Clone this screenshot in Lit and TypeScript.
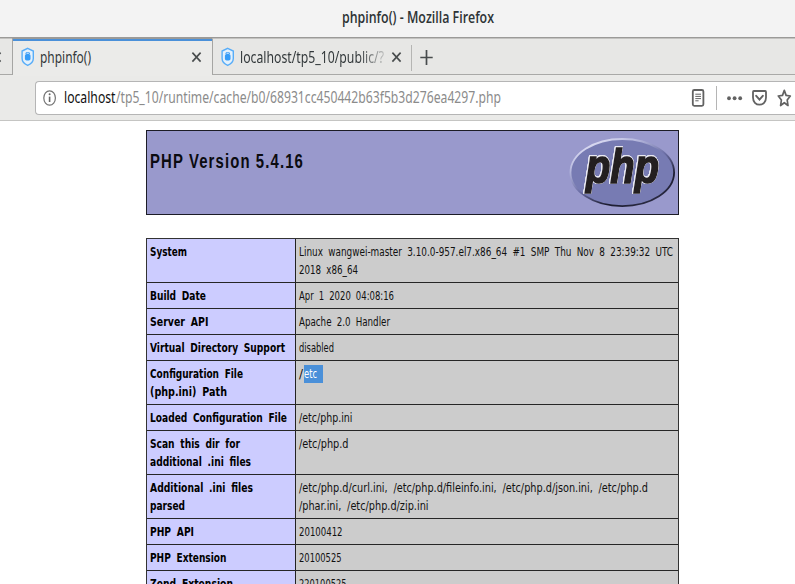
import { LitElement, html, css } from "lit";
import { customElement, property } from "lit/decorators.js";

/** One line of text fitted to a given width. */
@customElement("fit-text")
class FitText extends LitElement {
  @property() text = "";
  @property({ type: Number }) w = 100;
  @property({ type: Number }) h = 18;
  @property({ type: Number }) base = 14;

  static styles = css`
    :host { display: block; flex: none; }
    svg { display: block; overflow: visible; }
    text { fill: currentColor; white-space: pre; }
  `;

  render() {
    return html`<svg width=${this.w} height=${this.h}>
      <text x="0" y=${this.base} textLength=${this.w} lengthAdjust="spacingAndGlyphs">${this.text}</text>
    </svg>`;
  }
}

type Line = [string, number];
interface Row { name: Line[]; value: Line[]; selected?: boolean; }

const ROWS: Row[] = [
  { name: [["System", 37]], value: [["Linux wangwei-master 3.10.0-957.el7.x86_64 #1 SMP Thu Nov 8 23:39:32 UTC", 374], ["2018 x86_64", 59]] },
  { name: [["Build Date", 56]], value: [["Apr 1 2020 04:08:16", 95]] },
  { name: [["Server API", 58.5]], value: [["Apache 2.0 Handler", 91]] },
  { name: [["Virtual Directory Support", 135]], value: [["disabled", 35]] },
  { name: [["Configuration File", 93], ["(php.ini) Path", 77]], value: [["/", 4]], selected: true },
  { name: [["Loaded Configuration File", 137]], value: [["/etc/php.ini", 53.5]] },
  { name: [["Scan this dir for", 90], ["additional .ini files", 101]], value: [["/etc/php.d", 49.5]] },
  { name: [["Additional .ini files", 103], ["parsed", 35]], value: [["/etc/php.d/curl.ini, /etc/php.d/fileinfo.ini, /etc/php.d/json.ini, /etc/php.d", 349], ["/phar.ini, /etc/php.d/zip.ini", 129.5]] },
  { name: [["PHP API", 44]], value: [["20100412", 43.5]] },
  { name: [["PHP Extension", 76.5]], value: [["20100525", 42.5]] },
  { name: [["Zend Extension", 83]], value: [["220100525", 47.5]] },
];

const favicon = html`<svg class="favicon" width="14" height="20" viewBox="0 0 14 20">
  <path d="M6.7 1.3 L12.3 4 V11.5 C12.3 15 10 17 6.7 18.4 C3.4 17 1.1 15 1.1 11.5 V4 Z" fill="#e4f1fc" stroke="#58adf8" stroke-width="1.4"/>
  <rect x="3.9" y="7" width="5.6" height="6.6" rx="1.8" fill="#359cf8"/>
  <path d="M5 7 V5.8 H8.4 V7" fill="none" stroke="#359cf8"/>
</svg>`;

const close = html`<svg class="close" width="12" height="14" viewBox="0 0 12 14">
  <path d="M1.4 2.6 L9.6 11.6 M9.6 2.6 L1.4 11.6" stroke="#484c4d" stroke-width="1.6"/>
</svg>`;

@customElement("app-root")
class AppRoot extends LitElement {
  static styles = css`
    :host {
      display: flex; flex-direction: column; width: 795px; height: 584px;
      overflow: hidden; background: #fff; color: #2e3436;
      font: 16.5px "Noto Sans", "Open Sans", sans-serif;
    }
    .titlebar { box-sizing: border-box; height: 38px; flex: none; padding: 7px 0 0 342px; background: #f3f3f3; border-bottom: 1px solid #9b9a98; font-weight: 600; font-size: 16px; font-family: "Open Sans", "Noto Sans", sans-serif; }
    .tabs { height: 38px; flex: none; display: flex; background: #ebebe9; color: #33393b; }
    .tab, .rest, .stub { box-sizing: border-box; height: 37px; background: #e7e7e5; border-top: 1px solid #c3c2c0; border-bottom: 1px solid #a9a9a7; display: flex; align-items: flex-start; }
    .stub { width: 12px; overflow: hidden; }
    .stub .close { margin-left: -9px; }
    .tab { width: 199.5px; border-left: 1px solid #a5a5a3; padding: 8px 0 0 8px; }
    .tab.active { background: #ebebe9; border-bottom: 0; border-top: 1px solid #9b9a98; padding-top: 0; box-shadow: inset 0 2px #4a90d9; }
    .active > * { margin-top: 8px; }
    .favicon { flex: none; margin-right: 5px; display: block; }
    .active .close { display: block; margin: 11px 9px 0 auto; }
    .tab:not(.active) .close { display: block; margin: 3px 8.5px 0 auto; }
    .stub .close { display: block; margin-top: 11px; }
    .fade { mask-image: linear-gradient(90deg, #000 82%, transparent 105%); -webkit-mask-image: linear-gradient(90deg, #000 82%, transparent 105%); }
    .rest { flex: 1; padding: 6px 0 0; }
    .sep { width: 1px; height: 26px; background: #b5b5b3; margin-right: 7px; }
    .nav { box-sizing: border-box; height: 45px; flex: none; background: #eaeae8; padding: 5px 0 0 35px; border-bottom: 1px solid #c5c5c3; display: flex; }
    .url { box-sizing: border-box; height: 34px; flex: 1; border: 1px solid #b5b5b5; border-right: 0; border-radius: 4px 0 0 4px; background: #fff; display: flex; padding: 0 0 0 7px; }
    .url > svg { display: block; flex: none; }
    .info { margin-right: 7px; }
    .host { color: #111; }
    .path { color: #8b8b8b; }
    .actions { margin-left: auto; }
    .page { flex: 1; min-height: 0; padding: 9px 0 0 146.4px; display: flex; flex-direction: column; color: #000; }
    .banner { box-sizing: border-box; width: 533px; height: 85px; flex: none; background: #9999cc; border: 1px solid #1c1c26; display: flex; justify-content: space-between; padding: 7px 3px 0 3px; }
    .banner .h { font: bold 20px "Liberation Sans", Arial, sans-serif; letter-spacing: 1.5px; padding-top: 7px; color: #0b0b10; }
    .logo { display: block; }
    .logo-text { font: italic bold 48px "Liberation Sans", Arial, sans-serif; filter: drop-shadow(0.8px 0 0 #e8e8f2) drop-shadow(-0.8px 0 0 #e8e8f2) drop-shadow(0 0.8px 0 #e8e8f2) drop-shadow(0 -0.8px 0 #e8e8f2); }
    .info-table { width: 533px; margin-top: 23px; box-sizing: border-box; border: 1px solid #333; border-bottom: 0; flex: none; }
    .row { display: flex; border-bottom: 1px solid #262626; }
    .name, .value { word-spacing: 3px; font-stretch: condensed; }
    .name { box-sizing: border-box; width: 149px; flex: none; background: #ccccff; border-right: 1px solid #222; padding: 4px 2px 3px 3px; font: bold 12px "DejaVu Sans Condensed", "DejaVu Sans", sans-serif; }
    .value { flex: 1; background: #cccccc; padding: 4px 2px 3px 3px; font: 12px "DejaVu Sans Condensed", "DejaVu Sans", sans-serif; color: #111; }
    .pick { display: flex; }
    .sel { background: #4a90d9; color: #fff; width: 19px; height: 18px; margin-left: 1px; }
  `;

  private lines(ls: Line[]) {
    return ls.map(([t, w]) => html`<fit-text .text=${t} .w=${w} .h=${18} .base=${13.4}></fit-text>`);
  }

  render() {
    return html`
      <div class="titlebar"><fit-text .text=${"phpinfo() - Mozilla Firefox"} .w=${152} .h=${24} .base=${15.6}></fit-text></div>
      <div class="tabs">
        <div class="stub">${close}</div>
        <div class="tab active">${favicon}<fit-text .text=${"phpinfo()"} .w=${51} .h=${24} .base=${16.4}></fit-text>${close}</div>
        <div class="tab">${favicon}<fit-text class="fade" .text=${"localhost/tp5_10/public/?"} .w=${144} .h=${24} .base=${16.4}></fit-text>${close}</div>
        <div class="rest"><div class="sep"></div>
          <svg width="16" height="26" viewBox="0 0 16 26"><path d="M1.3 12.5 H13.7 M7.5 5 V20" stroke="#484c4d" stroke-width="1.7"/></svg>
        </div>
      </div>
      <div class="nav"><div class="url">
        <svg class="info" width="14" height="32" viewBox="0 0 14 32">
          <ellipse cx="6.6" cy="16" rx="5.8" ry="7.2" fill="none" stroke="#737373" stroke-width="1.2"/>
          <path d="M6.6 14.6 V20" stroke="#666" stroke-width="1.6"/><circle cx="6.6" cy="12.2" r="1" fill="#666"/>
        </svg>
        <fit-text class="host" .text=${"localhost"} .w=${51.5} .h=${31} .base=${21}></fit-text>
        <fit-text class="path" .text=${"/tp5_10/runtime/cache/b0/68931cc450442b63f5b3d276ea4297.php"} .w=${385} .h=${31} .base=${21}></fit-text>
        <svg class="actions" width="105" height="32" viewBox="690 82 105 32" fill="none" stroke="#626262">
          <rect x="692.8" y="90" width="10.6" height="15.8" rx="1.5" stroke-width="1.8"/>
          <path d="M695.3 94.2 H701 M695.3 96.4 H701 M695.3 98.6 H701 M695.3 100.8 H698.6" stroke-width="1"/>
          <path d="M716.5 86 V110" stroke="#b5b5b5" stroke-width="1"/>
          <g fill="#626262" stroke="none"><ellipse cx="729" cy="98.2" rx="1.9" ry="2"/><ellipse cx="734.6" cy="98.2" rx="1.9" ry="2"/><ellipse cx="740.2" cy="98.2" rx="1.9" ry="2"/></g>
          <path d="M753.8 91 H765.2 Q766 91 766 92 V97.5 C766 102 763 104.7 759.5 104.7 C756 104.7 753 102 753 97.5 V92 Q753 91 753.8 91 Z" stroke-width="1.8"/>
          <path d="M756.2 95.8 L759.5 99.6 L762.8 95.8" stroke-width="1.9" stroke-linecap="round"/>
          <path d="M784.3 90.4 L786.1 95.4 L790.3 96 L787.2 100 L788 105.5 L784.3 102.7 L780.6 105.5 L781.4 100 L778.3 96 L782.5 95.4 Z" stroke-width="1.7" stroke-linejoin="round"/>
        </svg>
      </div></div>
      <div class="page">
        <div class="banner">
          <fit-text class="h" .text=${"PHP Version 5.4.16"} .w=${154} .h=${30} .base=${23}></fit-text>
          <svg class="logo" width="106" height="70" viewBox="569 138 106 70">
            <defs>
              <linearGradient id="rim" x1="0.15" y1="0" x2="0.85" y2="1">
                <stop offset="0" stop-color="#e8e8fa"/><stop offset=".25" stop-color="#b4b6dc"/>
                <stop offset=".5" stop-color="#6c6fa6"/><stop offset=".75" stop-color="#1c1c30"/><stop offset="1" stop-color="#30304a"/>
              </linearGradient>
            </defs>
            <ellipse cx="622.3" cy="172.6" rx="51.8" ry="33.6" fill="#777bb3" stroke="url(#rim)" stroke-width="1.8"/>
            <text class="logo-text" x="586" y="183" textLength="73" lengthAdjust="spacingAndGlyphs"
              fill="#231f20" stroke="#231f20" stroke-width="1.6">php</text>
          </svg>
        </div>
        <div class="info-table">
          ${ROWS.map((r) => html`<div class="row">
            <div class="name">${this.lines(r.name)}</div>
            <div class="value">${r.selected
              ? html`<div class="pick">${this.lines(r.value)}<div class="sel"><fit-text .text=${"etc"} .w=${13} .h=${18} .base=${13.4}></fit-text></div></div>`
              : this.lines(r.value)}</div>
          </div>`)}
        </div>
      </div>`;
  }
}
